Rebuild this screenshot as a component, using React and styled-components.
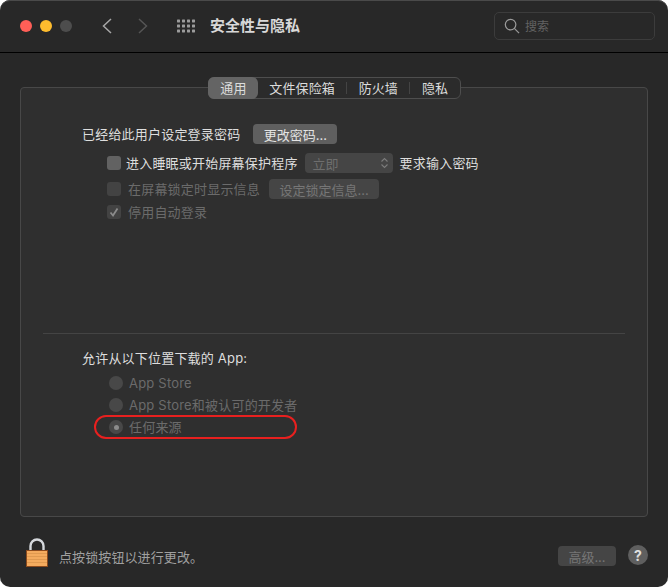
import React from "react";
import styled, { createGlobalStyle } from "styled-components";

const Global = createGlobalStyle`
  html, body { margin: 0; padding: 0; background: #fff; }
  * { box-sizing: border-box; }
`;

const FONT = `Inter, "Noto Sans CJK SC", sans-serif`;

const Window = styled.div`
  width: 668px;
  height: 587px;
  background: #282828;
  border-radius: 10px;
  overflow: hidden;
  display: flex;
  flex-direction: column;
  font-family: ${FONT};
  box-shadow: inset 0 1px 0 #4a4a4a;
`;
const TitleBar = styled.header`
  height: 53px;
  flex: none;
  border-bottom: 1px solid #000;
  display: flex;
  align-items: center;
  padding: 0 13px 1px 20px;
`;
const Lights = styled.div`
  display: flex;
  gap: 8px;
`;
const Light = styled.span`
  width: 12px;
  height: 12px;
  border-radius: 50%;
  background: ${(p) => p.$c};
`;
const NavIcon = styled.svg`
  width: 12px;
  height: 18px;
  flex: none;
  margin-left: ${(p) => p.$ml}px;
  fill: none;
  stroke: ${(p) => p.$c};
  stroke-width: 1.5;
`;
const GridIcon = styled.svg`
  width: 18px;
  height: 14px;
  flex: none;
  margin-left: 28px;
  fill: #9b9b9b;
`;
const Title = styled.h1`
  margin: 0 0 0 15px;
  font-size: 15px;
  line-height: 20px;
  font-weight: 700;
  color: #d8d8d8;
  white-space: nowrap;
`;
const Search = styled.div`
  margin-left: auto;
  width: 161px;
  height: 28px;
  border: 1px solid #3c3c3c;
  border-radius: 5px;
  display: flex;
  align-items: center;
  padding-left: 9px;
  gap: 5px;
  color: #626262;
  font-size: 12px;
`;
const SearchIcon = styled.svg`
  width: 16px;
  height: 16px;
  flex: none;
  fill: none;
  stroke: #9a9a9a;
  stroke-width: 1.3;
`;
const Body = styled.main`
  flex: none;
  display: flex;
  flex-direction: column;
  padding: 24px 20px 0;
`;
const Tabs = styled.nav`
  align-self: center;
  margin: 0 0 -12px 1px;
  position: relative;
  z-index: 1;
  width: 253px;
  height: 22px;
  border: 1px solid #4e4e4e;
  border-radius: 6px;
  background: #2b2b2b;
  display: flex;
  align-items: center;
`;
const Tab = styled.span`
  height: ${(p) => (p.$active ? "22px" : "12px")};
  width: ${(p) => p.$w}px;
  margin: ${(p) => (p.$active ? "0 0 0 -1px" : "0")};
  padding: 0 0 1px ${(p) => (p.$active ? "1px" : "0")};
  display: flex;
  align-items: center;
  justify-content: center;
  font-size: 13px;
  letter-spacing: 0.1px;
  color: #dcdcdc;
  border-radius: ${(p) => (p.$active ? "6px" : "0")};
  background: ${(p) => (p.$active ? "#646464" : "transparent")};
  border-left: ${(p) => (p.$sep ? "1px solid #444" : "none")};
`;
const Panel = styled.section`
  height: 430px;
  flex: none;
  background: #2f2f2f;
  border: 1px solid #484848;
  border-radius: 4px;
  padding: 33px 22px 0 22px;
  display: flex;
  flex-direction: column;
`;
const Upper = styled.div`
  height: 212px;
  padding-left: 39px;
  flex: none;
  display: flex;
  flex-direction: column;
`;
const Row = styled.div`
  display: flex;
  align-items: center;
  height: ${(p) => p.$h || 22}px;
  margin-top: ${(p) => p.$mt || 0}px;
  margin-left: ${(p) => p.$ml || 0}px;
`;
const Label = styled.span`
  font-size: 13px;
  line-height: 20px;
  letter-spacing: 0.2px;
  color: ${(p) => (p.$dim ? "#6b6b6b" : "#dedede")};
  white-space: nowrap;
  margin-left: ${(p) => p.$ml || 0}px;
`;
const Btn = styled.span`
  height: ${(p) => p.$h}px;
  width: ${(p) => p.$w}px;
  margin-left: ${(p) => p.$ml}px;
  border-radius: 4px;
  background: ${(p) => (p.$dim ? "#454545" : "#5f5f5f")};
  color: ${(p) => (p.$dim ? "#767676" : "#e4e4e4")};
  font-size: 13px;
  display: flex;
  align-items: center;
  justify-content: center;
  white-space: nowrap;
  flex: none;
`;
const Box = styled.span`
  width: 14px;
  height: 14px;
  flex: none;
  border-radius: 3px;
  background: ${(p) => (p.$dim ? "#434343" : "#626262")};
  display: flex;
  align-items: center;
  justify-content: center;
`;
const Check = styled.svg`
  width: 10px;
  height: 10px;
  fill: none;
  stroke: #8b8b8b;
  stroke-width: 1.8;
`;
const Select = styled.span`
  width: 88px;
  height: 20px;
  margin: 0 7px;
  border-radius: 4px;
  background: #454545;
  color: #6e6e6e;
  font-size: 13px;
  padding: 0 4px 0 8px;
  display: flex;
  align-items: center;
  justify-content: space-between;
  flex: none;
`;
const Updown = styled.svg`
  width: 9px;
  height: 12px;
  fill: none;
  stroke: #7c7c7c;
  stroke-width: 1.1;
`;
const Divider = styled.hr`
  margin: 0;
  border: 0;
  height: 1px;
  background: #444;
  flex: none;
`;
const Lower = styled.div`
  padding: 14px 0 0 39px;
  display: flex;
  flex-direction: column;
`;
const Radios = styled.div`
  position: relative;
  margin: 4px 0 0 27px;
  display: flex;
  flex-direction: column;
`;
const RadioRow = styled.div`
  height: 22px;
  display: flex;
  align-items: center;
  gap: 6px;
`;
const Radio = styled.span`
  width: 14px;
  height: 14px;
  border-radius: 50%;
  background: #484848;
  flex: none;
  display: flex;
  align-items: center;
  justify-content: center;
  &::after {
    content: "";
    width: 5px;
    height: 5px;
    border-radius: 50%;
    background: ${(p) => (p.$on ? "#8c8c8c" : "transparent")};
  }
`;
const Ring = styled.span`
  position: absolute;
  left: -15px;
  top: 43px;
  width: 203px;
  height: 24px;
  border: 2px solid #e8201f;
  border-radius: 12px;
`;
const Footer = styled.footer`
  flex: 1;
  display: flex;
  align-items: center;
  padding: 8px 20px 0 26px;
`;
const Lock = styled.svg`
  width: 22px;
  height: 29px;
  flex: none;
  margin-bottom: 8px;
`;
const FootText = styled.span`
  margin-left: 11px;
  font-size: 13px;
  letter-spacing: 0.1px;
  color: #a0a0a0;
`;
const Advanced = styled.span`
  margin-left: auto;
  width: 58px;
  height: 20px;
  border-radius: 4px;
  background: #454545;
  color: #767676;
  font-size: 13px;
  display: flex;
  align-items: center;
  justify-content: center;
`;
const Help = styled.span`
  margin: 0 0 2px 12px;
  width: 20px;
  height: 20px;
  border-radius: 50%;
  background: #5f5f5f;
  color: #e0e0e0;
  font-size: 14px;
  font-weight: 700;
  display: flex;
  align-items: center;
  justify-content: center;
`;

const dots = [];
for (let r = 0; r < 3; r++) for (let c = 0; c < 4; c++) dots.push([c * 5, r * 5]);

export default function App() {
  return (
    <>
      <Global />
      <Window>
        <TitleBar>
          <Lights>
            <Light $c="#ff5f57" />
            <Light $c="#febc2e" />
            <Light $c="#4d4d4d" />
          </Lights>
          <NavIcon $ml={29} $c="#a6a6a6" viewBox="0 0 12 18"><path d="M10 2 2.5 9l7.5 7" /></NavIcon>
          <NavIcon $ml={24} $c="#555" viewBox="0 0 12 18"><path d="M2 2l7.5 7L2 16" /></NavIcon>
          <GridIcon viewBox="0 0 18 14">
            {dots.map(([x, y]) => <rect key={x + "-" + y} x={x} y={y + 0.5} width="3" height="3" rx=".4" />)}
          </GridIcon>
          <Title>安全性与隐私</Title>
          <Search>
            <SearchIcon viewBox="0 0 17 17"><circle cx="7" cy="7" r="5.6" /><path d="M11 11l5 5" /></SearchIcon>
            搜索
          </Search>
        </TitleBar>
        <Body>
          <Tabs>
            <Tab $active $w={50}>通用</Tab>
            <Tab $w={89}>文件保险箱</Tab>
            <Tab $sep $w={63}>防火墙</Tab>
            <Tab $sep $w={51}>隐私</Tab>
          </Tabs>
          <Panel>
            <Upper>
              <Row $h={26}>
                <Label>已经给此用户设定登录密码</Label>
                <Btn $w={84} $h={20} $ml={13}>更改密码...</Btn>
              </Row>
              <Row $ml={25} $mt={3} $h={26}>
                <Box />
                <Label $ml={5}>进入睡眠或开始屏幕保护程序</Label>
                <Select>
                  立即
                  <Updown viewBox="0 0 9 12"><path d="M1.5 4.5 4.5 1.5l3 3M1.5 7.5l3 3 3-3" /></Updown>
                </Select>
                <Label>要求输入密码</Label>
              </Row>
              <Row $ml={25} $h={26}>
                <Box $dim />
                <Label $dim $ml={7}>在屏幕锁定时显示信息</Label>
                <Btn $dim $w={110} $h={20} $ml={9}>设定锁定信息...</Btn>
              </Row>
              <Row $ml={25} $h={20}>
                <Box $dim><Check viewBox="0 0 10 10"><path d="M1.5 5.5 4 8.5 8.5 1.5" /></Check></Box>
                <Label $dim $ml={7}>停用自动登录</Label>
              </Row>
            </Upper>
            <Divider />
            <Lower>
              <Label>允许从以下位置下载的 App:</Label>
              <Radios>
                <RadioRow><Radio /><Label $dim>App Store</Label></RadioRow>
                <RadioRow><Radio /><Label $dim>App Store和被认可的开发者</Label></RadioRow>
                <RadioRow><Radio $on /><Label $dim>任何来源</Label></RadioRow>
                <Ring />
              </Radios>
            </Lower>
          </Panel>
        </Body>
        <Footer>
          <Lock viewBox="0 0 22 29">
            <path d="M4.5 13V8a6.5 6.5 0 0 1 13 0v5" fill="none" stroke="#d5d8dc" strokeWidth="2.4" />
            <rect x="0.5" y="12.5" width="21" height="16" fill="#f4ab5e" stroke="#8c4a1c" />
            <path d="M1 15.5h20M1 18.5h20M1 21.5h20M1 24.5h20" stroke="#e09a50" strokeWidth="1" />
          </Lock>
          <FootText>点按锁按钮以进行更改。</FootText>
          <Advanced>高级...</Advanced>
          <Help>?</Help>
        </Footer>
      </Window>
    </>
  );
}
